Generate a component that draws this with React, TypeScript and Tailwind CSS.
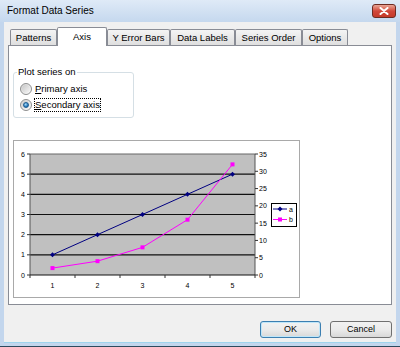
import React from "react";

const tabs = [
  { label: "Patterns", w: "w-[47px]" },
  { label: "Axis", w: "w-[50px]", active: true },
  { label: "Y Error Bars", w: "w-[63px]" },
  { label: "Data Labels", w: "w-[65px]" },
  { label: "Series Order", w: "w-[67px]" },
  { label: "Options", w: "w-[46px]" },
];

function Chart() {
  const left = 16;
  const right = 241;
  const top = 13;
  const bottom = 134;
  const h = bottom - top;
  const y1 = (v: number) => bottom - (v * h) / 6;
  const y2 = (v: number) => bottom - (v * h) / 35;
  const xs = [0, 1, 2, 3, 4].map((i) => left + 22.5 + 45 * i);
  const a = [1, 2, 3, 4, 5];
  const b = [2, 4, 8, 16, 32];
  const diamond = (cx: number, cy: number, k: number) => (
    <polygon
      key={k}
      points={`${cx},${cy - 2.5} ${cx + 2.5},${cy} ${cx},${cy + 2.5} ${cx - 2.5},${cy}`}
      fill="#000080"
    />
  );
  return (
    <svg width="285" height="156" viewBox="0 0 285 156" className="block">
      <rect x={left} y={top} width={right - left} height={h} fill="#c0c0c0" />
      {[1, 2, 3, 4, 5].map((v) => (
        <line key={v} x1={left} x2={right} y1={y1(v)} y2={y1(v)} stroke="#111" strokeWidth="1.2" />
      ))}
      <line x1={left} x2={right} y1={top} y2={top} stroke="#666" strokeWidth="1" />
      {/* axes */}
      <line x1={left} x2={left} y1={top} y2={bottom} stroke="#555" strokeWidth="1" />
      <line x1={right} x2={right} y1={top} y2={bottom} stroke="#555" strokeWidth="1" />
      <line x1={left} x2={right} y1={bottom} y2={bottom} stroke="#111" strokeWidth="1.2" />
      {[0, 1, 2, 3, 4, 5, 6].map((v) => (
        <g key={v}>
          <line x1={left - 3} x2={left} y1={y1(v)} y2={y1(v)} stroke="#333" />
          <text x={left - 5} y={y1(v) + 2.5} fontSize="7" textAnchor="end" fill="#000" fontFamily="Liberation Sans, Arial, sans-serif">
            {v}
          </text>
        </g>
      ))}
      {[0, 5, 10, 15, 20, 25, 30, 35].map((v) => (
        <g key={v}>
          <line x1={right} x2={right + 3} y1={y2(v)} y2={y2(v)} stroke="#333" />
          <text x={right + 4} y={y2(v) + 2.5} fontSize="7" fill="#000" fontFamily="Liberation Sans, Arial, sans-serif">
            {v}
          </text>
        </g>
      ))}
      {[0, 1, 2, 3, 4, 5].map((i) => (
        <line key={i} x1={left + 45 * i} x2={left + 45 * i} y1={bottom} y2={bottom + 3} stroke="#333" />
      ))}
      {xs.map((x, i) => (
        <text key={i} x={x} y={147} fontSize="7" textAnchor="middle" fill="#000" fontFamily="Liberation Sans, Arial, sans-serif">
          {i + 1}
        </text>
      ))}
      <polyline points={xs.map((x, i) => `${x},${y1(a[i])}`).join(" ")} fill="none" stroke="#000080" strokeWidth="1" />
      {xs.map((x, i) => diamond(x, y1(a[i]), i))}
      <polyline points={xs.map((x, i) => `${x},${y2(b[i])}`).join(" ")} fill="none" stroke="#ff00ff" strokeWidth="1" />
      {xs.map((x, i) => (
        <rect key={i} x={x - 2} y={y2(b[i]) - 2} width="4" height="4" fill="#ff00ff" />
      ))}
      {/* legend */}
      <rect x="257.5" y="62.5" width="25" height="23" fill="#fff" stroke="#000" strokeWidth="1" />
      <line x1="259" x2="273" y1="68" y2="68" stroke="#000080" />
      {diamond(266, 68, 99)}
      <text x="275" y="70.5" fontSize="7" fill="#000" fontFamily="Liberation Sans, Arial, sans-serif">a</text>
      <line x1="259" x2="273" y1="78.5" y2="78.5" stroke="#ff00ff" />
      <rect x="264" y="76.5" width="4" height="4" fill="#ff00ff" />
      <text x="275" y="81" fontSize="7" fill="#000" fontFamily="Liberation Sans, Arial, sans-serif">b</text>
    </svg>
  );
}

function Radio({ checked }: { checked?: boolean }) {
  return (
    <div className="w-[12px] h-[12px] rounded-full border border-[#8e8f8f] bg-linear-to-br from-[#d4d4d4] to-[#ffffff] flex items-center justify-center">
      <div className="w-[8px] h-[8px] rounded-full bg-linear-to-br from-[#c8c8c8] to-[#f7f7f7] flex items-center justify-center">
        {checked && (
          <div className="w-[6px] h-[6px] rounded-full bg-[radial-gradient(circle_at_40%_35%,#a6dcfb,#1b6eb3_70%)] border border-[#1c5b8f]" />
        )}
      </div>
    </div>
  );
}

export default function App() {
  return (
    <div className="w-[400px] h-[347px] flex flex-col bg-[#c3d6ed] font-['Liberation_Sans',Arial,sans-serif] text-black border-b border-[#2d4a5e] overflow-hidden">
      {/* title bar */}
      <div className="h-[22px] flex items-center justify-between pl-[7px] pr-[4px] bg-linear-to-b from-[#dfeaf7] to-[#c5d8ee]">
        <span className="text-[10px] leading-none">Format Data Series</span>
        <div className="w-[24px] h-[14px] rounded-[3px] border border-[#6d2b22] bg-linear-to-b from-[#e8a597] via-[#d1473a] to-[#c53b2a] flex items-center justify-center">
          <svg width="10" height="8" viewBox="0 0 10 8">
            <path d="M1.5 1 L8.5 7 M8.5 1 L1.5 7" stroke="#fff" strokeWidth="2" strokeLinecap="round" />
          </svg>
        </div>
      </div>
      {/* content */}
      <div className="flex-1 mx-[4px] mb-[3px] bg-[#f0f0f0] border-b border-[#9fd3ec] flex flex-col px-[4px] pt-[5px]">
        <div className="h-[18px] flex items-end pl-[2px] relative z-10">
          {tabs.map((t) =>
            t.active ? (
              <div
                key={t.label}
                className={`${t.w} h-[19px] -mb-px bg-white border border-b-0 border-[#898c95] rounded-t-[2px] flex items-center justify-center text-[9.5px] leading-none`}
              >
                {t.label}
              </div>
            ) : (
              <div
                key={t.label}
                className={`${t.w} h-[16px] bg-linear-to-b from-[#f4f4f4] to-[#dfdfdf] border border-b-0 border-[#898c95] rounded-t-[2px] flex items-center justify-center text-[9.5px] leading-none pt-[1px]`}
              >
                {t.label}
              </div>
            )
          )}
        </div>
        <div className="h-[260px] bg-white border border-[#898c95] flex flex-col pl-[4px]">
          <fieldset className="mt-[20px] w-[121px] h-[52px] border border-[#d5dfe5] rounded-[3px] px-0 pb-0">
            <legend className="ml-[3px] px-[1px] text-[9.5px] leading-[12px]">Plot series on</legend>
            <div className="flex flex-col pl-[6px] pt-[3px]">
              <div className="h-[16px] flex items-center">
                <Radio />
                <span className="ml-[3px] text-[9.5px] leading-none">
                  <span className="underline">P</span>rimary axis
                </span>
              </div>
              <div className="h-[16px] flex items-center">
                <Radio checked />
                <span className="ml-[2px] text-[9.5px] leading-none border border-dotted border-black px-[0px] py-[1px]">
                  <span className="underline">S</span>econdary axis
                </span>
              </div>
            </div>
          </fieldset>
          <div className="mt-[22px] w-[287px] h-[158px] border border-[#a9a9a9] bg-white">
            <Chart />
          </div>
        </div>
        <div className="mt-[16px] flex justify-end gap-[9px]">
          <button className="w-[61px] h-[17px] rounded-[3px] border border-[#3c7fb1] bg-linear-to-b from-[#f2f2f2] via-[#ebebeb] to-[#d8d8d8] shadow-[inset_0_0_0_1px_#bfe6f9] text-[9px] leading-none flex items-center justify-center">
            OK
          </button>
          <button className="w-[62px] h-[17px] rounded-[3px] border border-[#707070] bg-linear-to-b from-[#f2f2f2] via-[#ebebeb] to-[#d8d8d8] text-[9px] leading-none flex items-center justify-center">
            Cancel
          </button>
        </div>
      </div>
    </div>
  );
}
